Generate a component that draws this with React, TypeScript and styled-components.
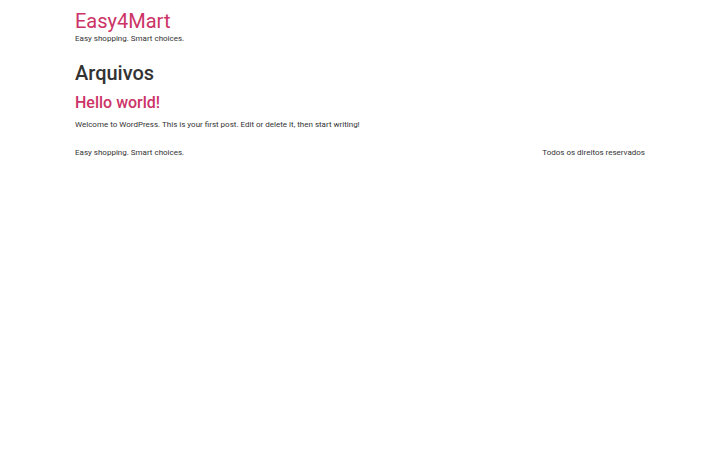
import React from "react";
import styled, { createGlobalStyle } from "styled-components";

const Global = createGlobalStyle`
  html, body { margin: 0; padding: 0; background: #fff; }
  body {
    font-family: Roboto, "Liberation Sans", sans-serif;
    font-size: 8px;
    line-height: 12px;
    color: #333;
  }
`;

const Container = styled.div`
  width: 570px;
  margin: 0 auto;
`;

const Header = styled.header`
  padding-top: 9px;
`;

const SiteTitle = styled.h1`
  margin: 0;
  font-size: 20px;
  font-weight: 400;
  line-height: 24px;
  color: #cc3366;
`;

const Tagline = styled.p`
  margin: 0;
`;

const Main = styled.main`
  padding-top: 16px;
`;

const PageTitle = styled.h1`
  margin: 0 0 8px;
  font-size: 20px;
  font-weight: 500;
  line-height: 24px;
  color: #333;
`;

const PostTitle = styled.h2`
  margin: 0 0 7px;
  font-size: 16px;
  font-weight: 500;
  line-height: 19.2px;
  color: #cc3366;
`;

const Excerpt = styled.p`
  margin: 0;
`;

const Footer = styled.footer`
  display: flex;
  justify-content: space-between;
  align-items: center;
  padding-top: 16px;
`;

export default function App() {
  return (
    <>
      <Global />
      <Container>
        <Header>
          <SiteTitle>Easy4Mart</SiteTitle>
          <Tagline>Easy shopping. Smart choices.</Tagline>
        </Header>
        <Main>
          <PageTitle>Arquivos</PageTitle>
          <PostTitle>Hello world!</PostTitle>
          <Excerpt>Welcome to WordPress. This is your first post. Edit or delete it, then start writing!</Excerpt>
        </Main>
        <Footer>
          <span>Easy shopping. Smart choices.</span>
          <span>Todos os direitos reservados</span>
        </Footer>
      </Container>
    </>
  );
}
